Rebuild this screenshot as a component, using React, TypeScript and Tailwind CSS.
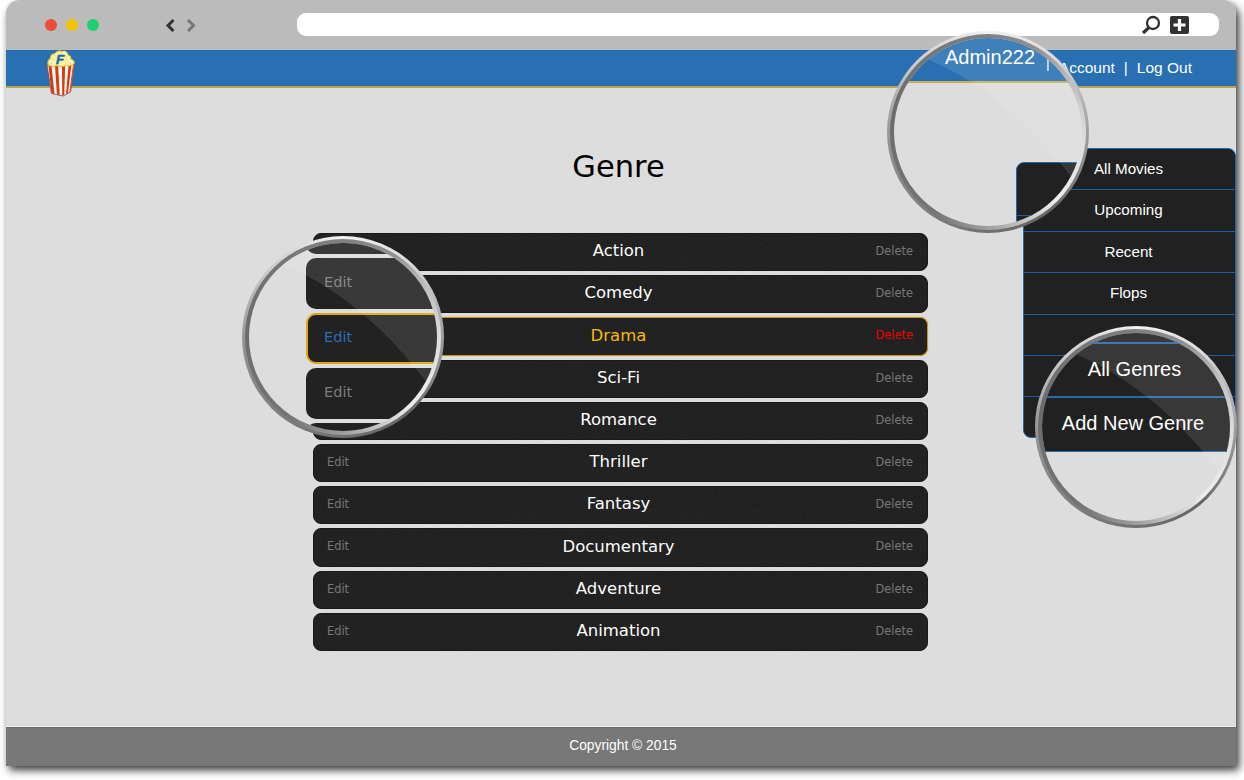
import React from "react";

const genres = ["Action", "Comedy", "Drama", "Sci-Fi", "Romance", "Thriller", "Fantasy", "Documentary", "Adventure", "Animation"];
const menu = ["All Movies", "Upcoming", "Recent", "Flops", "", "", ""];

function Grain() {
  return (
    <svg className="absolute inset-0 h-full w-full opacity-[0.07]" aria-hidden="true">
      <filter id="grain">
        <feTurbulence type="fractalNoise" baseFrequency="0.75" numOctaves="2" seed="4" />
        <feColorMatrix type="saturate" values="0" />
      </filter>
      <rect width="100%" height="100%" filter="url(#grain)" />
    </svg>
  );
}

function Popcorn() {
  return (
    <svg className="block h-[47px] w-[30px]" viewBox="0 0 30 47" aria-hidden="true">
      <path d="M1 15 L28.500 14 L24.500 42 L17 46 L5.500 43.500 Z" fill="#fffaf5" stroke="#8a4a5a" strokeWidth="0.9" />
      <path d="M2.500 16h3l3 28-3-1zM9 16h3.200l1.500 29-2.800-.6zM16 16h3.200l-1 29-2 .5zM22.500 16h2.800L22 43l-2 1zM27 15h1l-3.600 26-1 1z" fill="#d23c10" />
      <path d="M2 15 C1 11 3 9 4.500 8 C4 5 7 3 9 4 C10 1 14 0 16 1.500 C20 0 22 3 22 5 C25 5 25 8 25 9 C28 10 29 12 28 14 C24 17 21 15 19 16 C15 18 12 15 10 16 C7 17 4 16 2 15Z" fill="#faf09b" stroke="#d9ad25" strokeWidth="1" />
      <path d="M4 11h2m1-4h2m-2 6h2m0-9h2m7 0h2m-9 9h2m4 0h2m2-5h2m0 3h2m-1 2h2m-9-11h2" stroke="#fffde0" strokeWidth="1.500" />
      <path d="M5 13h1m4 1h1m9-6h1m3 5h1m-6 1h1M8 6h1m-2 3h1" stroke="#d8c24c" strokeWidth="1" />
      <text x="10" y="13.600" fontFamily="Liberation Sans, sans-serif" fontWeight="bold" fontStyle="italic" fontSize="13.500" fill="#2068ad" stroke="#2068ad" strokeWidth="0.5">F</text>
    </svg>
  );
}

function Lens({ place, children }: { place: string; children: React.ReactNode }) {
  return (
    <div className={`absolute z-10 size-[202px] rounded-full p-[3px] bg-[conic-gradient(#f2f2f2_0deg,#dcdcdc_40deg,#aaa_80deg,#8c8c8c_110deg,#666_140deg,#707070_180deg,#808080_225deg,#929292_265deg,#c8c8c8_310deg,#f2f2f2_360deg)] ${place}`}>
      <div className="size-full rounded-full p-[4px] bg-[conic-gradient(#808080_0deg,#909090_30deg,#c0c0c0_60deg,#dcdcdc_90deg,#eee_135deg,#b8b8b8_165deg,#979797_185deg,#747474_215deg,#6c6c6c_280deg,#777_325deg,#808080_360deg)]">
        <div className="relative size-[188px] overflow-hidden rounded-full bg-[#ddd]">
          {children}
          <svg className="absolute inset-0 size-full" viewBox="7 7 188 188" aria-hidden="true">
            <path d="M7 7 L38 27 Q124 62.500 191 155 L202 155 V0 H7Z" fill="#fff" fillOpacity="0.105" />
          </svg>
        </div>
      </div>
    </div>
  );
}

function ZoomRow({ label = "", active = false }: { label?: string; active?: boolean }) {
  return (
    <div className={`relative flex h-[51px] w-[180px] shrink-0 items-center overflow-hidden rounded-[10px] bg-[#1d1d1d] font-['DejaVu_Sans',sans-serif] text-[14.600px] ${active ? "border-2 border-[#e0a50c] pl-[16px] text-[#2470b8]" : "pl-[18px] text-[#7c7c7c]"}`}>
      <Grain />
      <span className="relative -mt-[3px]">{label}</span>
    </div>
  );
}

export default function App() {
  return (
    <div className="h-[780px] w-[1244px] overflow-hidden bg-white pl-[6px] font-['Liberation_Sans',Arial,sans-serif]">
      <div className="relative flex h-[766px] w-[1230px] flex-col rounded-t-[14px] bg-[#ddd] shadow-[3px_4px_8px_rgba(0,0,0,0.8)]">
        <div className="flex h-[50px] shrink-0 items-center rounded-t-[14px] bg-[#bbb]">
          <div className="ml-[39px] flex gap-[9px]">
            <span className="size-[12px] rounded-full bg-[#eb4d36]" />
            <span className="size-[12px] rounded-full bg-[#f3c500]" />
            <span className="size-[12px] rounded-full bg-[#20d070]" />
          </div>
          <svg className="ml-[66px] h-[14px] w-[32px]" viewBox="0 0 32 14" fill="none" strokeWidth="3" aria-hidden="true">
            <path d="M8.500 2 L3 7.500 L8.500 13" stroke="#333" />
            <path d="M23 2 L28.500 7.500 L23 13" stroke="#777" />
          </svg>
          <div className="-mt-[1px] ml-[100px] flex h-[23px] w-[922px] items-center justify-end rounded-[9px] bg-white pr-[30px]">
            <svg className="mt-[1px] h-[20px] w-[48px]" viewBox="0 0 48 20" aria-hidden="true">
              <circle cx="12" cy="8" r="6" fill="none" stroke="#333" strokeWidth="2.300" />
              <path d="M8 12.500 L2 18" stroke="#333" strokeWidth="3.200" />
              <rect x="29" y="1" width="19" height="18" rx="2" fill="#333" />
              <path d="M38.500 4v12M32.500 10h12" stroke="#fff" strokeWidth="3.200" />
            </svg>
          </div>
        </div>

        <div className="flex h-[38px] shrink-0 items-start border-b-2 border-[#b8a64e] bg-[#2970b2] pl-[40px] text-[15.500px] text-white">
          <Popcorn />
          <div className="mr-[44px] ml-auto flex h-full items-center gap-[9px] whitespace-pre">
            <span>Account</span><span>|</span><span>Log Out</span>
          </div>
        </div>

        <div className="flex grow border-b border-[#eee]">
          <div className="ml-[307px] w-[615px] font-['DejaVu_Sans',Verdana,sans-serif]">
            <h1 className="mt-[59px] text-center text-[30.500px] leading-[40px] text-black">
              <span className="relative -left-[2px]">Genre</span>
            </h1>
            <div className="mt-[46px] flex flex-col gap-[3.900px]">
              {genres.map((g, i) => {
                const on = g === "Drama";
                return (
                  <div key={g} className={`relative grid h-[38.300px] grid-cols-[100px_1fr_100px] items-center overflow-hidden rounded-[8px] border pb-[1px] text-[11.400px] text-[#777] bg-[#1d1d1d] ${on ? "border-[#c8950e] shadow-[0_0_1px_#c8950e]" : "border-[#191919]"}`}>
                    <Grain />
                    <span className="relative pl-[13px]">{i > 4 ? "Edit" : ""}</span>
                    <span className={`relative -left-[2px] text-center text-[16.500px] ${on ? "text-[#f5b90a]" : "text-white"}`}>{g}</span>
                    <span className={`relative pr-[14px] text-right ${on ? "text-[#ec0000]" : ""}`}>Delete</span>
                  </div>
                );
              })}
            </div>
          </div>
          <div className="mt-[60px] ml-auto h-[290px] w-[213px] overflow-hidden rounded-[8px] border border-[#1e68ae] bg-[#212121] text-[15.200px] text-white">
            {menu.map((m, i) => (
              <div key={i} className="flex h-[41.400px] items-center justify-center border-b border-[#1f5d9c] pr-[2px] last:border-b-0">{m}</div>
            ))}
          </div>
        </div>

        <div className="flex h-[39px] shrink-0 items-center justify-center border-t border-[#6d6d6d] bg-[#787878] pb-[1px] pl-[4px] text-[13.800px] text-white">Copyright © 2015</div>

        <Lens place="left-[881px] top-[31px]">
          <div className="flex h-[45px] items-start border-b-2 border-[#ccae4f] bg-[#2970b2] pt-[8px] pl-[51px] text-white">
            <span className="text-[20px] leading-[23px]">Admin222</span>
            <span className="mt-[9px] ml-[11px] text-[14px] leading-[16px]">|</span>
          </div>
          <div className="mt-[79px] ml-[122px] h-[90px] w-[120px] rounded-tl-[8px] border border-[#1e68ae] bg-[#212121]">
            <div className="h-[53px] border-b border-[#1f5d9c]" />
          </div>
        </Lens>

        <Lens place="left-[236px] top-[236px]">
          <div className="-mt-[40px] ml-[57px] flex flex-col gap-[4px]">
            <ZoomRow />
            <ZoomRow label="Edit" />
            <ZoomRow label="Edit" active />
            <ZoomRow label="Edit" />
            <ZoomRow />
          </div>
        </Lens>

        <Lens place="left-[1029px] top-[326px]">
          <div className="flex flex-col bg-[#212121] text-[20px] text-white">
            <div className="h-[11px] border-b-2 border-[#246bae]" />
            <div className="flex h-[54px] items-center justify-center border-b-2 border-[#246bae] pr-[3px] pb-[3px]">All Genres</div>
            <div className="flex h-[54px] items-center justify-center border-b border-[#246bae] pr-[6px] pb-[4px] whitespace-nowrap">Add New Genre</div>
          </div>
        </Lens>
      </div>
    </div>
  );
}
